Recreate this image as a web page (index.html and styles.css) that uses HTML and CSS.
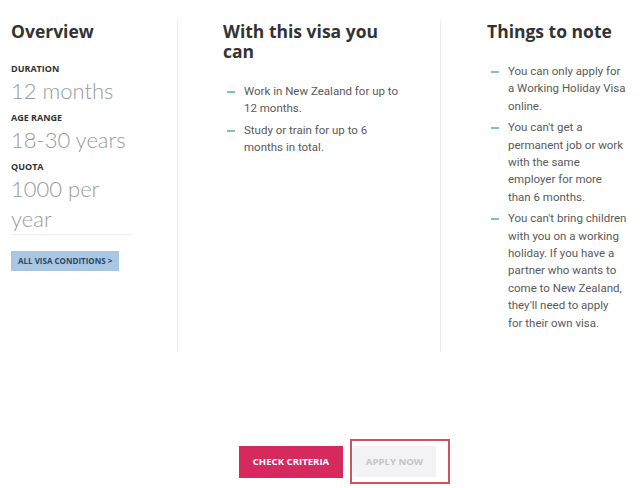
FILE: index.html
```html
<!DOCTYPE html>
<html lang="en">

<head>
    <meta charset="UTF-8">
    <meta name="viewport" content="width=device-width, initial-scale=1.0">
    <title>Working Holiday Visa</title>
    <link rel="stylesheet" href="styles.css">
</head>

<body>
    <div class="cols">
        <div class="col overview">
            <h2>Overview</h2>
            <div class="label">DURATION</div>
            <div class="value">12 months</div>
            <div class="label">AGE RANGE</div>
            <div class="value">18-30 years</div>
            <div class="label">QUOTA</div>
            <div class="value last">1000 per year</div>
            <a class="cond-btn" href="#">ALL VISA CONDITIONS &gt;</a>
        </div>
        <div class="col can">
            <h2>With this visa you can</h2>
            <ul class="dash-list">
                <li>Work in New Zealand for up to 12 months.</li>
                <li>Study or train for up to 6 months in total.</li>
            </ul>
        </div>
        <div class="col notes">
            <h2>Things to note</h2>
            <ul class="dash-list">
                <li>You can only apply for a Working Holiday Visa online.</li>
                <li>You can't get a permanent job or work with the same employer for more than 6 months.</li>
                <li>You can't bring children with you on a working holiday. If you have a partner who wants to come to New Zealand, they'll need to apply for&nbsp;their own visa.</li>
            </ul>
        </div>
    </div>
    <div class="actions">
        <a class="btn btn-check" href="#">CHECK CRITERIA</a>
        <div class="highlight">
            <a class="btn btn-apply" href="#">APPLY NOW</a>
        </div>
    </div>
</body>

</html>
```

FILE: styles.css
```css
body {
    margin: 0;
    background-color: #fff;
    font-family: 'Open Sans', 'Liberation Sans', sans-serif;
    color: #555;
}

.cols {
    display: grid;
    grid-template-columns: 178px 263px 199px;
    padding-top: 20px;
}

.col {
    height: 332px;
    padding-left: 45px;
    border-right: 1px solid #ebebf0;
    box-sizing: border-box;
}

.col.notes {
    border-right: none;
    padding-left: 46px;
}

.col h2 {
    margin: 0;
    font-size: 17.5px;
    line-height: 20px;
    font-weight: 700;
    color: #333;
    padding-top: 1px;
    width: 175px;
}

/* Overview column */
.overview {
    padding-left: 11px;
}

.overview h2 {
    margin-bottom: 21px;
}

.label {
    font-size: 9px;
    font-weight: 700;
    color: #333;
    line-height: 14px;
}

.value {
    font-family: 'Lato', 'Open Sans', sans-serif;
    font-size: 22px;
    font-weight: 300;
    color: #9a9a9a;
    line-height: 30px;
    margin-bottom: 5px;
    width: 122px;
}

.value.last {
    border-bottom: 1px solid #eeeef0;
    margin-bottom: 16px;
}

.cond-btn {
    display: block;
    width: max-content;
    background-color: #a9c7e2;
    color: #2c4766;
    font-size: 8px;
    font-weight: 700;
    text-decoration: none;
    line-height: 20px;
    padding: 0 7px;
}

/* Lists */
.dash-list {
    list-style: none;
    margin: 22px 0 0;
    padding: 0 0 0 21px;
    font-family: 'Roboto', 'Open Sans', sans-serif;
    font-size: 11.5px;
    line-height: 17.4px;
    color: #5a5a5a;
}

.can .dash-list {
    width: 165px;
}

.notes .dash-list {
    width: 119px;
}

.dash-list li {
    position: relative;
    margin-bottom: 4px;
}

.dash-list li::before {
    content: '';
    position: absolute;
    left: -17px;
    top: 8px;
    width: 8px;
    height: 2px;
    background-color: #7fc2b6;
}

/* Bottom buttons */
.actions {
    display: flex;
    align-items: center;
    padding: 87px 0 0 239px;
}

.btn {
    display: block;
    font-size: 9.6px;
    font-weight: 700;
    text-decoration: none;
    text-align: center;
    line-height: 32px;
}

.btn-check {
    width: 104px;
    background-color: #d62a5f;
    color: #fff;
}

.highlight {
    margin-left: 7px;
    border: 2px solid #c9575a;
    padding: 5px 12px 5px 1px;
}

.btn-apply {
    width: 83px;
    line-height: 31px;
    background-color: #f3f3f5;
    color: #c4c4c8;
}
```
